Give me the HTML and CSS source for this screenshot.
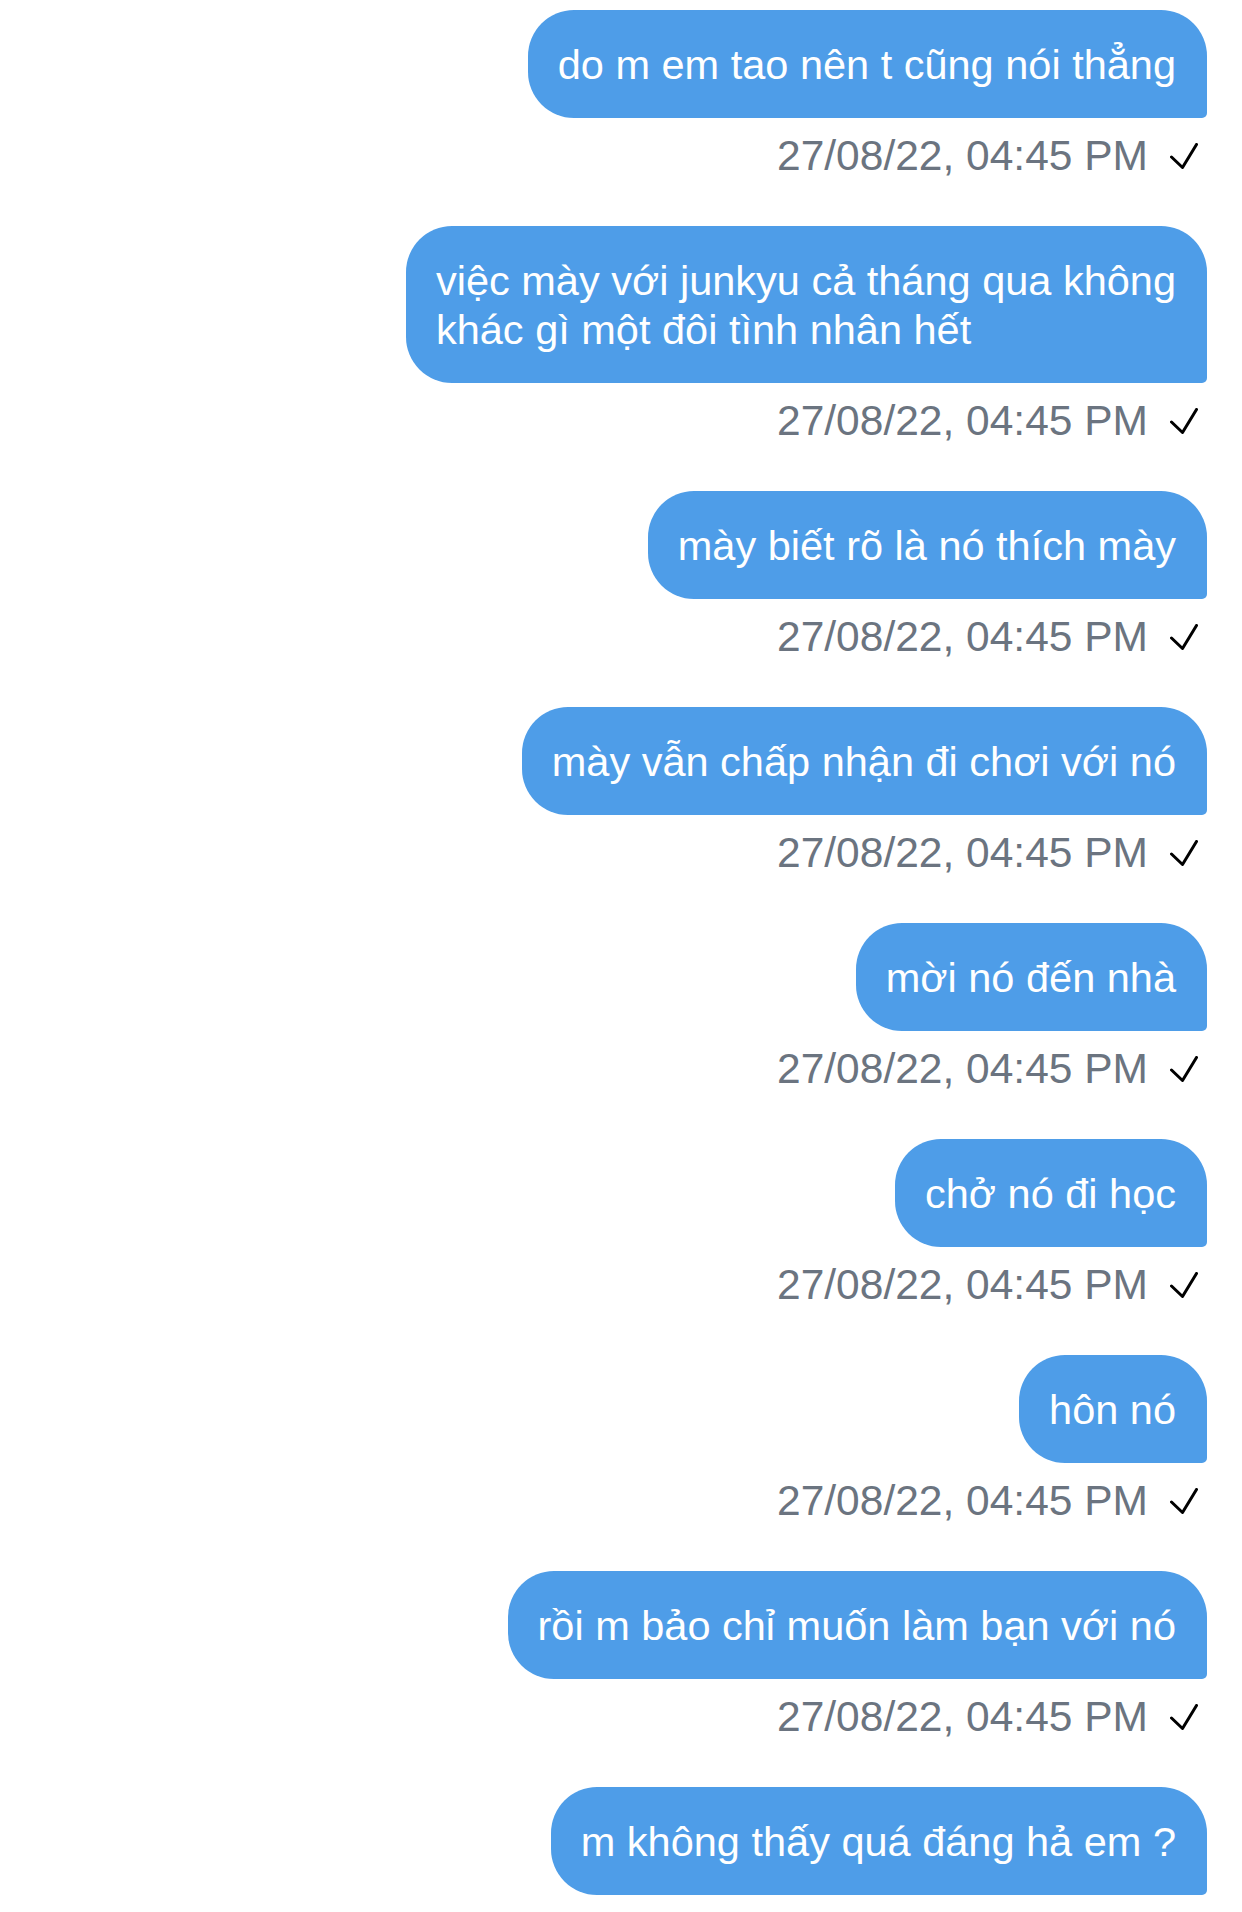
FILE: index.html
```html
<!DOCTYPE html>
<html lang="vi">
<head>
<meta charset="utf-8">
<title>Chat</title>
<link rel="stylesheet" href="styles.css">
</head>
<body>
<div class="thread">
  <div class="msg">
    <div class="bubble">do m em tao nên t cũng nói thẳng</div>
    <div class="meta"><span class="time">27/08/22, 04:45 PM</span><svg class="check" viewBox="0 0 28 26"><path d="M1.5 14 L12.5 24.5 L26.5 1.5"/></svg></div>
  </div>
  <div class="msg">
    <div class="bubble">việc mày với junkyu cả tháng qua không<br>khác gì một đôi tình nhân hết</div>
    <div class="meta"><span class="time">27/08/22, 04:45 PM</span><svg class="check" viewBox="0 0 28 26"><path d="M1.5 14 L12.5 24.5 L26.5 1.5"/></svg></div>
  </div>
  <div class="msg">
    <div class="bubble">mày biết rõ là nó thích mày</div>
    <div class="meta"><span class="time">27/08/22, 04:45 PM</span><svg class="check" viewBox="0 0 28 26"><path d="M1.5 14 L12.5 24.5 L26.5 1.5"/></svg></div>
  </div>
  <div class="msg">
    <div class="bubble">mày vẫn chấp nhận đi chơi với nó</div>
    <div class="meta"><span class="time">27/08/22, 04:45 PM</span><svg class="check" viewBox="0 0 28 26"><path d="M1.5 14 L12.5 24.5 L26.5 1.5"/></svg></div>
  </div>
  <div class="msg">
    <div class="bubble">mời nó đến nhà</div>
    <div class="meta"><span class="time">27/08/22, 04:45 PM</span><svg class="check" viewBox="0 0 28 26"><path d="M1.5 14 L12.5 24.5 L26.5 1.5"/></svg></div>
  </div>
  <div class="msg">
    <div class="bubble">chở nó đi học</div>
    <div class="meta"><span class="time">27/08/22, 04:45 PM</span><svg class="check" viewBox="0 0 28 26"><path d="M1.5 14 L12.5 24.5 L26.5 1.5"/></svg></div>
  </div>
  <div class="msg">
    <div class="bubble">hôn nó</div>
    <div class="meta"><span class="time">27/08/22, 04:45 PM</span><svg class="check" viewBox="0 0 28 26"><path d="M1.5 14 L12.5 24.5 L26.5 1.5"/></svg></div>
  </div>
  <div class="msg">
    <div class="bubble">rồi m bảo chỉ muốn làm bạn với nó</div>
    <div class="meta"><span class="time">27/08/22, 04:45 PM</span><svg class="check" viewBox="0 0 28 26"><path d="M1.5 14 L12.5 24.5 L26.5 1.5"/></svg></div>
  </div>
  <div class="msg">
    <div class="bubble">m không thấy quá đáng hả em ?</div>
  </div>
</div>
</body>
</html>
```
FILE: styles.css
```css
html, body {
  margin: 0;
  padding: 0;
  background: #ffffff;
  overflow: hidden;
}
body {
  font-family: "Liberation Sans", Arial, sans-serif;
  width: 1242px;
  height: 1912px;
}
.thread {
  display: flex;
  flex-direction: column;
  align-items: flex-end;
  padding: 10px 35px 0 0;
  gap: 46px;
}
.msg {
  display: flex;
  flex-direction: column;
  align-items: flex-end;
}
.bubble {
  background: #4e9de8;
  color: #ffffff;
  font-size: 41.5px;
  line-height: 49px;
  padding: 30px 31px 29px 30px;
  border-radius: 46px 46px 5px 46px;
  white-space: nowrap;
}
.meta {
  display: flex;
  align-items: center;
  margin-top: 14px;
  height: 48px;
  padding-right: 9px;
}
.time {
  color: #6b7480;
  font-size: 42.5px;
  line-height: 48px;
}
.check {
  width: 28px;
  height: 26px;
  margin-left: 22px;
  fill: none;
  stroke: #000000;
  stroke-width: 3;
  stroke-linecap: round;
  stroke-linejoin: round;
}
```
